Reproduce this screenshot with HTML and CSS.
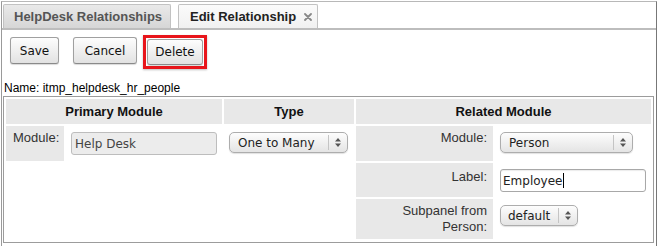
FILE: index.html
```html
<!DOCTYPE html>
<html>
<head>
<meta charset="utf-8">
<link rel="stylesheet" href="styles.css">
</head>
<body>
<div class="frame">
  <div class="tabbar">
    <div class="tab tab-inactive">HelpDesk Relationships</div>
    <div class="tab tab-active">Edit Relationship
      <svg class="close" width="8" height="8" viewBox="0 0 8 8"><path d="M1 1L7 7M7 1L1 7" stroke="#888" stroke-width="1.8" stroke-linecap="round"/></svg>
    </div>
  </div>
  <div class="buttons">
    <div class="btn btn-save">Save</div>
    <div class="btn btn-cancel">Cancel</div>
    <div class="highlight"><div class="btn btn-delete">Delete</div></div>
  </div>
  <div class="name">Name: itmp_helpdesk_hr_people</div>
  <div class="reltable">
    <div class="th">Primary Module</div>
    <div class="th">Type</div>
    <div class="th">Related Module</div>

    <div class="primary">
      <div class="lbl lbl-left">Module:</div>
      <div class="val val-primary"><div class="field field-disabled">Help Desk</div></div>
    </div>
    <div class="typecell">
      <div class="select select-type"><span class="sel-text">One to Many</span><span class="arrows"><svg width="6" height="9" viewBox="0 0 6 9"><path d="M3 0L6 3.5H0Z M3 9L6 5.5H0Z" fill="#555"/></svg></span></div>
    </div>
    <div class="related">
      <div class="lbl lbl-right r1">Module:</div>
      <div class="val val-related"><div class="select select-person"><span class="sel-text">Person</span><span class="arrows"><svg width="6" height="9" viewBox="0 0 6 9"><path d="M3 0L6 3.5H0Z M3 9L6 5.5H0Z" fill="#555"/></svg></span></div></div>
      <div class="lbl lbl-right r2">Label:</div>
      <div class="val val-related"><div class="field field-text">Employee<span class="caret"></span></div></div>
      <div class="lbl lbl-right r3">Subpanel from<br>Person:</div>
      <div class="val val-related"><div class="select select-default"><span class="sel-text">default</span><span class="arrows"><svg width="6" height="9" viewBox="0 0 6 9"><path d="M3 0L6 3.5H0Z M3 9L6 5.5H0Z" fill="#555"/></svg></span></div></div>
    </div>
  </div>
</div>
</body>
</html>
```
FILE: styles.css
```css
html, body {
  margin: 0;
  padding: 0;
  background: #fff;
}
body {
  font-family: "Liberation Sans", Arial, sans-serif;
  color: #111;
}
.frame {
  margin-top: 1px;
  margin-left: 1px;
  width: 656px;
  height: 245px;
  box-sizing: border-box;
  border-top: 1px solid #b8b8b8;
  border-left: 1px solid #9a9a9a;
  border-right: 1px solid #777;
}
.tabbar {
  display: flex;
  align-items: flex-end;
  gap: 7px;
  height: 26px;
  padding-left: 1px;
  border-bottom: 2px solid #bdbdbd;
}
.tab {
  height: 24px;
  box-sizing: border-box;
  display: flex;
  align-items: center;
  font-weight: bold;
  font-size: 13px;
  border: 1px solid #c2c2c2;
  border-bottom: none;
  border-radius: 2px 2px 0 0;
}
.tab-inactive {
  width: 168px;
  padding-left: 10px;
  color: #555;
  background: linear-gradient(#e9e9e9, #d6d6d6);
}
.tab-active {
  width: 140px;
  padding-left: 11px;
  color: #222;
  background: linear-gradient(#fbfbfb, #f1f1f1);
}
.close {
  margin-left: 8px;
}
.buttons {
  display: flex;
  align-items: flex-start;
  padding: 7px 0 0 8px;
  height: 44px;
  box-sizing: border-box;
}
.btn {
  height: 27px;
  box-sizing: border-box;
  display: flex;
  align-items: center;
  justify-content: center;
  font-family: "DejaVu Sans", sans-serif;
  font-size: 12px;
  color: #111;
  border: 1px solid #a0a0a0;
  border-bottom-color: #8a8a8a;
  border-radius: 3px;
  background: linear-gradient(#fdfdfd, #e2e2e2);
  box-shadow: 0 1px 1px rgba(0,0,0,0.15);
}
.btn-save { width: 49px; }
.btn-cancel { width: 64px; margin-left: 14px; }
.highlight {
  margin-left: 6px;
  margin-top: -2px;
  border: 3px solid #e8151b;
  padding: 1px;
  box-shadow: 0 1px 2px rgba(0,0,0,0.25);
}
.btn-delete {
  width: 56px;
  height: 26px;
}
.name {
  font-size: 12px;
  line-height: 14px;
  height: 15px;
  padding-left: 2px;
  color: #000;
  margin-top: 7px;
}
.reltable {
  margin-left: 1px;
  width: 651px;
  box-sizing: border-box;
  border: 1px solid #9c9c9c;
  padding: 2px;
  display: grid;
  grid-template-columns: 216px 130px 295px;
  gap: 2px;
}
.th {
  height: 25px;
  line-height: 25px;
  text-align: center;
  font-weight: bold;
  font-size: 13px;
  color: #111;
  background: #e8e8e8;
}
.primary {
  display: grid;
  grid-template-columns: 58px 1fr;
  align-items: start;
}
.lbl {
  background: #e8e8e8;
  font-size: 13px;
  line-height: 16px;
  color: #333;
  box-sizing: border-box;
}
.lbl-left {
  height: 35px;
  padding: 4px 0 0 7px;
}
.lbl-right {
  text-align: right;
  padding: 4px 6px 0 0;
}
.r2 { padding-top: 6px; }
.val-primary {
  padding: 6px 0 0 7px;
}
.typecell {
  padding: 6px 0 0 5px;
}
.related {
  display: grid;
  grid-template-columns: 137px 1fr;
  grid-template-rows: 35px 34px 40px;
  row-gap: 2px;
  padding-bottom: 1px;
}
.val-related {
  padding: 6px 0 0 7px;
}
.field {
  height: 23px;
  box-sizing: border-box;
  display: flex;
  align-items: center;
  font-family: "DejaVu Sans", sans-serif;
  font-size: 12px;
  border-radius: 3px;
}
.field-disabled {
  width: 146px;
  padding-left: 3px;
  color: #444;
  background: #ececec;
  border: 1px solid #bdbdbd;
}
.field-text {
  width: 146px;
  padding-left: 2px;
  color: #222;
  background: #fff;
  border: 1px solid #a8a8a8;
  box-shadow: inset 0 1px 1px rgba(0,0,0,0.08);
}
.caret {
  display: inline-block;
  width: 1px;
  height: 15px;
  background: #000;
  margin-left: 1px;
}
.select {
  height: 21px;
  box-sizing: border-box;
  display: flex;
  align-items: stretch;
  font-family: "DejaVu Sans", sans-serif;
  font-size: 12px;
  color: #222;
  border: 1px solid #adadad;
  border-radius: 5px;
  background: linear-gradient(#fdfdfd, #e4e4e4);
  box-shadow: 0 1px 1px rgba(0,0,0,0.12);
}
.sel-text {
  flex: 1;
  display: flex;
  align-items: center;
  padding-left: 8px;
}
.arrows {
  width: 18px;
  display: flex;
  align-items: center;
  justify-content: center;
  border-left: 1px solid #c4c4c4;
  margin: 2px 0;
}
.select-type { width: 119px; }
.select-person { width: 133px; }
.select-default { width: 78px; }
.select-default .sel-text { padding-left: 7px; }
```
